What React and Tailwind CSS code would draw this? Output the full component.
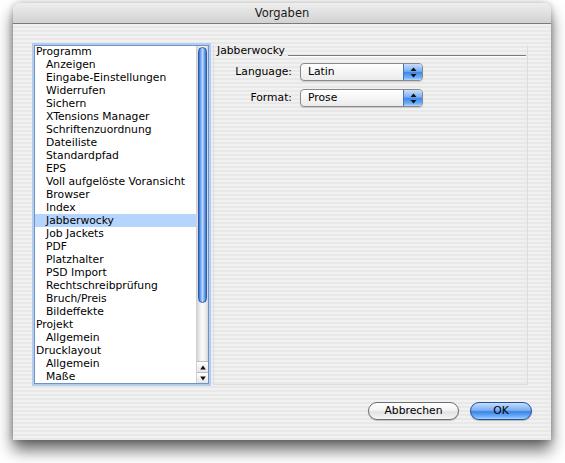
const items = [
  ["Programm", 0], ["Anzeigen", 1], ["Eingabe-Einstellungen", 1], ["Widerrufen", 1], ["Sichern", 1],
  ["XTensions Manager", 1], ["Schriftenzuordnung", 1], ["Dateiliste", 1], ["Standardpfad", 1], ["EPS", 1],
  ["Voll aufgelöste Voransicht", 1], ["Browser", 1], ["Index", 1], ["Jabberwocky", 1, true], ["Job Jackets", 1],
  ["PDF", 1], ["Platzhalter", 1], ["PSD Import", 1], ["Rechtschreibprüfung", 1], ["Bruch/Preis", 1],
  ["Bildeffekte", 1], ["Projekt", 0], ["Allgemein", 1], ["Drucklayout", 0], ["Allgemein", 1], ["Maße", 1],
];

function Arrows() {
  return (
    <svg width="7" height="11" viewBox="0 0 7 11">
      <polygon points="3.5,0.5 6.5,4 0.5,4" fill="#111" />
      <polygon points="0.5,7 6.5,7 3.5,10.5" fill="#111" />
    </svg>
  );
}

function Popup({ value }) {
  return (
    <div className="w-[123px] h-[18px] rounded-[4px] border border-[#8a8a8a] bg-gradient-to-b from-white to-[#ebebeb] flex overflow-hidden shadow-[0_1px_1px_rgba(0,0,0,0.15)]">
      <div className="flex-1 pl-[7px] leading-[16px] text-black">{value}</div>
      <div className="w-[19px] border-l border-[#4a73b8] bg-[linear-gradient(180deg,#c6defc_0%,#79aef2_45%,#3f86ea_52%,#6fb0f8_85%,#b2d9ff_100%)] flex items-center justify-center">
        <Arrows />
      </div>
    </div>
  );
}

export default function App() {
  return (
    <div
      className="w-[565px] h-[463px] bg-white overflow-hidden pt-[3px] pl-[13px] text-[10.75px] text-black"
      style={{ fontFamily: '"DejaVu Sans", "Liberation Sans", sans-serif' }}
    >
      <div className="w-[538px] h-[437px] rounded-t-[7px] shadow-[0_10px_16px_rgba(0,0,0,0.6),0_0_6px_rgba(0,0,0,0.25)] flex flex-col overflow-hidden">
        <div className="h-[21px] shrink-0 border-b border-[#7b7b7b] bg-gradient-to-b from-[#eeeeee] to-[#d2d2d2] flex items-center justify-center pt-[1px] text-[11.5px] text-[#1a1a1a]">
          Vorgaben
        </div>
        <div className="flex-1 flex flex-col pl-[21px] pr-[19px] pt-[21px] bg-[repeating-linear-gradient(180deg,#f1f1f1_0px,#f1f1f1_2px,#e8e8e8_2px,#e8e8e8_4px)]">
          <div className="flex">
            <div className="w-[175px] h-[339px] bg-white border border-[#6f93c6] shadow-[0_0_0_2px_#b3cdf0] flex overflow-hidden">
              <div className="flex-1 -mt-[1px] overflow-hidden">
                {items.map(([label, ind, sel], i) => (
                  <div
                    key={i}
                    className={
                      "h-[13px] leading-[13px] whitespace-nowrap " +
                      (ind ? "pl-[11px] " : "pl-[1px] ") +
                      (sel ? "bg-[#b5d5ff]" : "")
                    }
                  >
                    {label}
                  </div>
                ))}
              </div>
              <div className="w-[12px] shrink-0 border-l border-[#d0d0d0] flex flex-col bg-[linear-gradient(90deg,#d6d6d6_0%,#fbfbfb_45%,#f2f2f2_70%,#d6d6d6_100%)]">
                <div className="mx-[1px] mt-[1px] h-[256px] rounded-full border border-[#2a5fb8] bg-[linear-gradient(90deg,#3369c9_0%,#79aaf0_25%,#b6d6fb_50%,#79aaf0_75%,#3369c9_100%)]" />
                <div className="flex-1 mb-[1px] rounded-b-full" />
                <div className="h-[11px] border-t border-[#bdbdbd] flex items-center justify-center bg-gradient-to-b from-white to-[#e6e6e6]">
                  <svg width="6" height="5" viewBox="0 0 6 5"><polygon points="3,0.5 5.8,4.5 0.2,4.5" fill="#111" /></svg>
                </div>
                <div className="h-[11px] border-t border-[#bdbdbd] flex items-center justify-center bg-gradient-to-b from-white to-[#e6e6e6]">
                  <svg width="6" height="5" viewBox="0 0 6 5"><polygon points="0.2,0.5 5.8,0.5 3,4.5" fill="#111" /></svg>
                </div>
              </div>
            </div>
            <div className="ml-[4px] w-[315px] h-[340px] border-x border-b border-[#dcdcdc] flex flex-col">
              <div className="flex items-end pl-[3px] pr-[1px] h-[12px]">
                <span className="leading-[12px]">Jabberwocky</span>
                <div className="flex-1 ml-[3px] mb-[0px] h-[2px] border-t border-[#7a7a7a] border-b border-b-white" />
              </div>
              <div className="mt-[6px] grid grid-cols-[78px_123px] gap-x-[8px] gap-y-[8px] items-center">
                <div className="text-right">Language:</div>
                <Popup value="Latin" />
                <div className="text-right">Format:</div>
                <Popup value="Prose" />
              </div>
            </div>
          </div>
          <div className="mt-[17px] flex justify-end gap-[11px]">
            <div className="w-[91px] h-[18px] rounded-full border border-[#6d6d6d] bg-[linear-gradient(180deg,#ffffff_0%,#f4f4f4_45%,#e2e2e2_55%,#f6f6f6_100%)] flex items-center justify-center shadow-[0_1px_1px_rgba(0,0,0,0.2)]">
              Abbrechen
            </div>
            <div className="w-[62px] h-[18px] rounded-full border border-[#23509e] bg-[linear-gradient(180deg,#c4defe_0%,#7db0f2_45%,#3d82e6_55%,#6fb2fa_85%,#a9d6ff_100%)] flex items-center justify-center shadow-[0_1px_1px_rgba(0,0,0,0.25)]">
              OK
            </div>
          </div>
        </div>
      </div>
    </div>
  );
}
